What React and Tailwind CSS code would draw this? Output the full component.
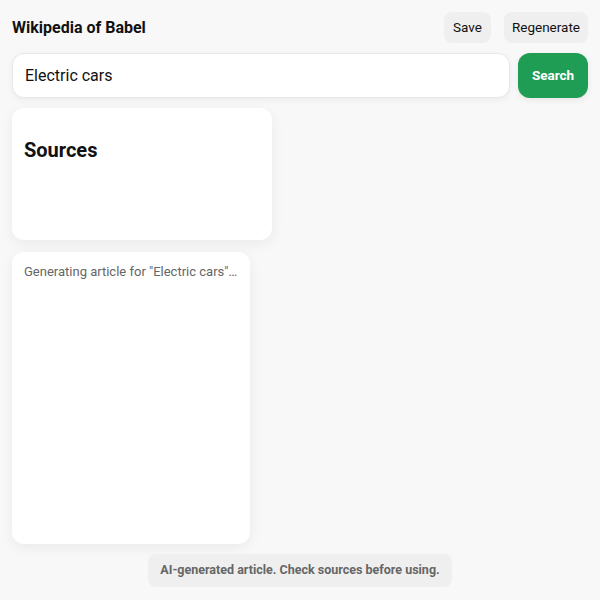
export default function App() {
  return (
    <div className="min-h-[600px] w-[600px] bg-[#f8f8f8] p-3 flex flex-col" style={{ fontFamily: "Roboto, 'Liberation Sans', sans-serif" }}>
      <div className="flex items-center justify-between h-[31px]">
        <h1 className="text-[16px] font-bold text-[#111] pt-[1px]">Wikipedia of Babel</h1>
        <div className="flex gap-[13px]">
          <button className="h-[31px] px-[9px] rounded-lg bg-[#efefef] text-[13.5px] text-[#111]">Save</button>
          <button className="h-[31px] px-[8px] rounded-lg bg-[#efefef] text-[13.5px] text-[#111]">Regenerate</button>
        </div>
      </div>
      <div className="flex gap-2 mt-[10px]">
        <div className="flex-1 h-[45px] rounded-xl bg-white border border-[#e8e8e8] shadow-[0_2px_6px_rgba(0,0,0,0.06)] flex items-center px-3 pt-[1px] text-[16px] text-[#111]">Electric cars</div>
        <button className="w-[70px] h-[45px] rounded-xl bg-[#1f9d55] text-white text-[13.5px] font-bold shadow-[0_2px_6px_rgba(0,0,0,0.08)]">Search</button>
      </div>
      <div className="mt-[10px] w-[260px] h-[132px] rounded-xl bg-white shadow-[0_4px_14px_rgba(0,0,0,0.06)] px-3 pt-[28px]">
        <h2 className="text-[20px] font-bold text-[#111] leading-[28px]">Sources</h2>
      </div>
      <div className="mt-3 w-[238px] h-[292px] rounded-xl bg-white shadow-[0_4px_14px_rgba(0,0,0,0.06)] px-3 pt-[10px]">
        <p className="text-[13px] text-[#666] leading-[20px]">Generating article for "Electric cars"…</p>
      </div>
      <div className="flex justify-center mt-[10px]">
        <div className="h-[33px] px-3 rounded-lg bg-[#efefef] flex items-center text-[12.5px] font-bold text-[#666]">AI-generated article. Check sources before using.</div>
      </div>
    </div>
  );
}
